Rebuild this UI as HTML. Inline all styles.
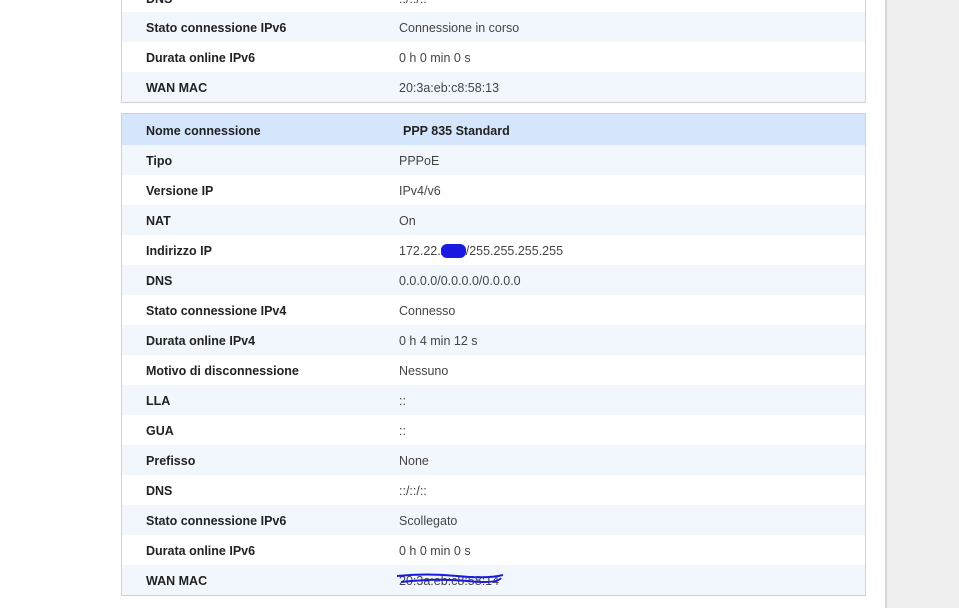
<!DOCTYPE html><html><head><style>
body{margin:0;width:959px;height:608px;overflow:hidden;background:#fff;font-family:"Liberation Sans",sans-serif;font-size:12.5px;color:#333;position:relative}
.side{position:absolute;left:885px;top:0;width:74px;height:608px;background:#f0f0f0;border-left:2px solid #d6d6d6;box-sizing:border-box}
.box{position:absolute;left:121px;width:745px;border:1px solid #d2d2d2;box-sizing:border-box}
.r{height:30px;line-height:32px;position:relative}
.r.a{background:#f2f7fe}
.r.h{background:#d5e5fb;height:31px;line-height:34px}
.l{position:absolute;left:24px;font-weight:bold;color:#222}
.v{position:absolute;left:277px;color:#444}
.h .v{font-weight:bold;color:#222;left:281px}
</style></head><body>
<div class="side"></div>
<div class="box" style="top:-18px;border-top:none">
<div class="r" style="line-height:34px"><span class="l">DNS</span><span class="v">::/::/::</span></div>
<div class="r a"><span class="l">Stato connessione IPv6</span><span class="v">Connessione in corso</span></div>
<div class="r"><span class="l">Durata online IPv6</span><span class="v">0 h 0 min 0 s</span></div>
<div class="r a"><span class="l">WAN MAC</span><span class="v">20:3a:eb:c8:58:13</span></div>
</div>
<div class="box" style="top:113px">
<div class="r h"><span class="l">Nome connessione</span><span class="v">PPP 835 Standard</span></div>
<div class="r a"><span class="l">Tipo</span><span class="v">PPPoE</span></div>
<div class="r"><span class="l">Versione IP</span><span class="v">IPv4/v6</span></div>
<div class="r a"><span class="l">NAT</span><span class="v">On</span></div>
<div class="r"><span class="l">Indirizzo IP</span><span class="v">172.22.<span style="background:#1a1ae0;color:#1a1ae0;border-radius:6px">xxxx</span>/255.255.255.255</span></div>
<div class="r a"><span class="l">DNS</span><span class="v">0.0.0.0/0.0.0.0/0.0.0.0</span></div>
<div class="r"><span class="l">Stato connessione IPv4</span><span class="v">Connesso</span></div>
<div class="r a"><span class="l">Durata online IPv4</span><span class="v">0 h 4 min 12 s</span></div>
<div class="r"><span class="l">Motivo di disconnessione</span><span class="v">Nessuno</span></div>
<div class="r a"><span class="l">LLA</span><span class="v">::</span></div>
<div class="r"><span class="l">GUA</span><span class="v">::</span></div>
<div class="r a"><span class="l">Prefisso</span><span class="v">None</span></div>
<div class="r"><span class="l">DNS</span><span class="v">::/::/::</span></div>
<div class="r a"><span class="l">Stato connessione IPv6</span><span class="v">Scollegato</span></div>
<div class="r"><span class="l">Durata online IPv6</span><span class="v">0 h 0 min 0 s</span></div>
<div class="r a"><span class="l">WAN MAC</span><span class="v">20:3a:eb:c8:58:14<svg style="position:absolute;left:-2px;top:8px" width="110" height="14"><path d="M0 3 Q30 0 60 3 T106 2 M4 9 Q40 5 70 8 T104 5" stroke="#1a1ae0" stroke-width="2" fill="none"/></svg></span></div>
</div>
</body></html>
